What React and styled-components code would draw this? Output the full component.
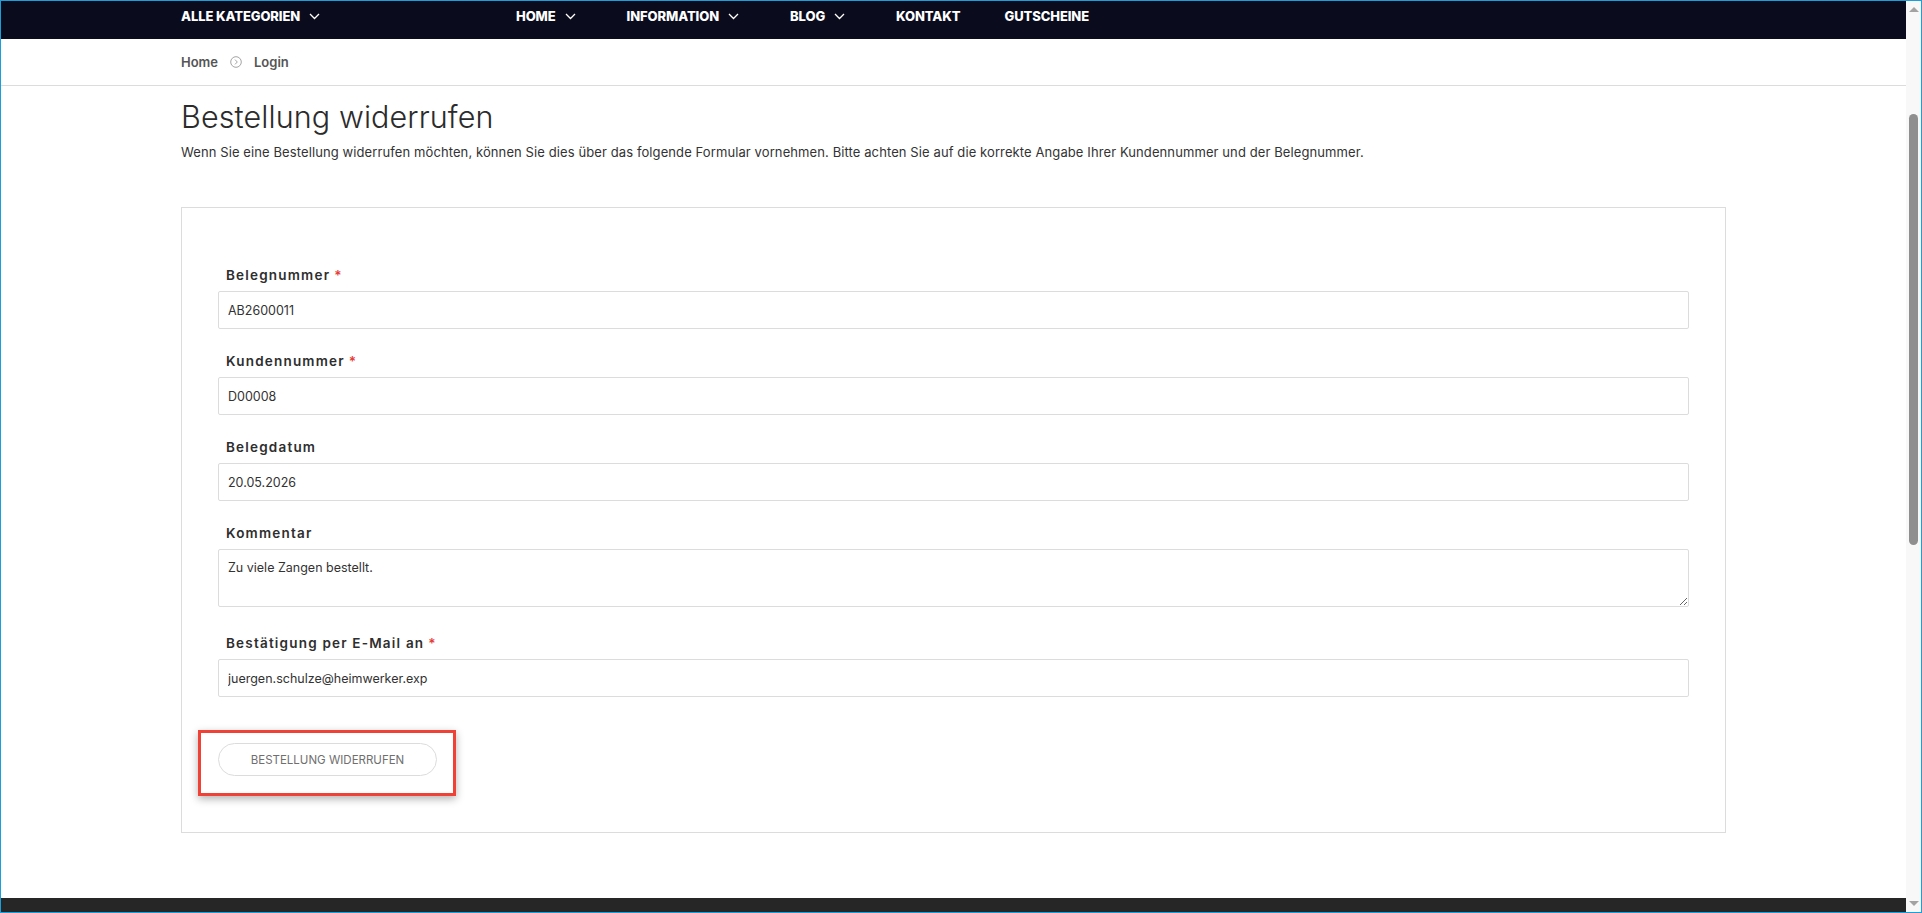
import React from 'react';
import styled, { createGlobalStyle } from 'styled-components';

const GlobalStyle = createGlobalStyle`
  html, body {
    margin: 0;
    padding: 0;
    overflow: hidden;
    background: #fff;
  }
  body {
    font-family: Inter, "Open Sans", "Liberation Sans", sans-serif;
    color: #333;
  }
  * {
    box-sizing: border-box;
  }
`;

const ChevronDown = () => (
  <svg width="11" height="7" viewBox="0 0 11 7" fill="none">
    <path d="M1 1l4.5 4.5L10 1" stroke="#fff" strokeWidth="1.3" />
  </svg>
);

const CircleChevron = () => (
  <svg width="12" height="12" viewBox="0 0 12 12" fill="none">
    <circle cx="6" cy="6" r="5.3" stroke="#9a9a9a" strokeWidth="0.9" />
    <path d="M5 3.6L7.3 6L5 8.4" stroke="#9a9a9a" strokeWidth="0.9" />
  </svg>
);

const fields = [
  { label: 'Belegnummer', value: 'AB2600011', required: true },
  { label: 'Kundennummer', value: 'D00008', required: true },
  { label: 'Belegdatum', value: '20.05.2026' },
  { label: 'Kommentar', value: 'Zu viele Zangen bestellt.', multiline: true },
  { label: 'Bestätigung per E-Mail an', value: 'juergen.schulze@heimwerker.exp', required: true },
];

const menu = [
  { name: 'Home', drop: true, space: 51 },
  { name: 'Information', drop: true, space: 51 },
  { name: 'Blog', drop: true, space: 51 },
  { name: 'Kontakt', space: 44 },
  { name: 'Gutscheine', space: 0 },
];

const App = () => {
  return (
    <>
      <GlobalStyle />
      <Frame>
        <Page>
          <TopNav>
            <Container>
              <NavRow>
                <Categories>
                  <NavLink>Alle Kategorien</NavLink>
                  <ChevronDown />
                </Categories>
                <Menu>
                  {menu.map((item) => (
                    <NavItem key={item.name} $space={item.space}>
                      <NavLink>{item.name}</NavLink>
                      {item.drop ? <ChevronDown /> : null}
                    </NavItem>
                  ))}
                </Menu>
              </NavRow>
            </Container>
          </TopNav>

          <BreadcrumbBar>
            <Container>
              <Crumbs>
                <Crumb>Home</Crumb>
                <CircleChevron />
                <Crumb>Login</Crumb>
              </Crumbs>
            </Container>
          </BreadcrumbBar>

          <Main>
            <Container>
              <Title>Bestellung widerrufen</Title>
              <Intro>
                Wenn Sie eine Bestellung widerrufen möchten, können Sie dies über das folgende Formular vornehmen. Bitte achten Sie auf die korrekte Angabe Ihrer Kundennummer und der Belegnummer.
              </Intro>

              <Card>
                {fields.map((f) => (
                  <Field key={f.label} $multiline={f.multiline}>
                    <Label>
                      {f.label}
                      {f.required ? <Required>*</Required> : null}
                    </Label>
                    {f.multiline ? (
                      <TextArea defaultValue={f.value} />
                    ) : (
                      <Input type="text" defaultValue={f.value} />
                    )}
                  </Field>
                ))}
                <Actions>
                  <Highlight>
                    <SubmitButton type="button">Bestellung widerrufen</SubmitButton>
                  </Highlight>
                </Actions>
              </Card>
            </Container>
          </Main>

          <Footer />
        </Page>

        <Scrollbar>
          <ArrowBox>
            <ArrowUp />
          </ArrowBox>
          <Track>
            <Thumb />
          </Track>
          <ArrowBox>
            <ArrowDown />
          </ArrowBox>
        </Scrollbar>
      </Frame>
    </>
  );
};

const Frame = styled.div`
  width: 1922px;
  height: 913px;
  border: 1px solid #1a9fdb;
  display: flex;
  overflow: hidden;
`;

const Page = styled.div`
  flex: 1;
  min-width: 0;
  display: flex;
  flex-direction: column;
`;

const Container = styled.div`
  width: 1545px;
  margin: 0 auto;
`;

const TopNav = styled.div`
  height: 38px;
  background: #0a0c1e;
`;

const NavRow = styled.div`
  display: flex;
  align-items: center;
  padding-top: 5px;
`;

const Categories = styled.div`
  width: 335px;
  display: flex;
  align-items: center;
  gap: 9px;
`;

const Menu = styled.div`
  display: flex;
  align-items: center;
`;

const NavItem = styled.div`
  display: flex;
  align-items: center;
  gap: 9px;
  margin-right: ${(p) => p.$space}px;
`;

const NavLink = styled.span`
  color: #fff;
  font-size: 13px;
  line-height: 20px;
  font-weight: 800;
  text-transform: uppercase;
  letter-spacing: -0.1px;
`;

const BreadcrumbBar = styled.div`
  height: 47px;
  border-bottom: 1px solid #dcdcdc;
  display: flex;
  align-items: center;
`;

const Crumbs = styled.div`
  display: flex;
  align-items: center;
  gap: 12px;
`;

const Crumb = styled.span`
  font-size: 13px;
  font-weight: 600;
  color: #555;
`;

const Main = styled.div`
  flex: 1;
  padding-top: 12px;
`;

const Title = styled.h1`
  margin: 0;
  font-size: 30.5px;
  line-height: 38px;
  font-weight: 300;
  color: #2b2b2b;
  letter-spacing: 0.1px;
`;

const Intro = styled.p`
  margin: 6px 0 45px;
  font-size: 13px;
  line-height: 20px;
  letter-spacing: 0.1px;
  color: #333;
`;

const Card = styled.div`
  border: 1px solid #dcdcdc;
  padding: 57px 36px 56px;
`;

const Field = styled.div`
  margin-bottom: ${(p) => (p.$multiline ? '26px' : '22px')};
`;

const Label = styled.label`
  display: block;
  padding-left: 8px;
  margin-bottom: 6px;
  font-size: 13.5px;
  line-height: 20px;
  font-weight: 600;
  letter-spacing: 1.2px;
  color: #2e2e2e;
`;

const Required = styled.span`
  color: #e53935;
  margin-left: 4px;
`;

const Input = styled.input`
  display: block;
  width: 100%;
  height: 38px;
  padding: 0 9px;
  border: 1px solid #dcdcdc;
  border-radius: 2px;
  font-family: inherit;
  font-size: 12.5px;
  color: #333;
  background: #fff;
  outline: none;
`;

const TextArea = styled.textarea`
  display: block;
  width: 100%;
  height: 58px;
  padding: 9px 9px;
  border: 1px solid #dcdcdc;
  border-radius: 2px;
  font-family: inherit;
  font-size: 12.5px;
  line-height: 18px;
  color: #333;
  background: #fff;
  resize: vertical;
  outline: none;
`;

/* the last field's 22px margin collapses into this one */
const Actions = styled.div`
  margin-top: 46px;
  display: flex;
`;

const Highlight = styled.div`
  position: relative;
  display: flex;

  &::after {
    content: '';
    position: absolute;
    top: -13px;
    left: -20px;
    right: -19px;
    bottom: -20px;
    border: 3px solid #ef4136;
    box-shadow: 0 3px 8px rgba(0, 0, 0, 0.3);
    pointer-events: none;
  }
`;

const SubmitButton = styled.button`
  width: 219px;
  height: 33px;
  border: 1px solid #dcdcdc;
  border-radius: 17px;
  background: #fff;
  font-family: inherit;
  font-size: 11.5px;
  font-weight: 400;
  color: #6f6f6f;
  text-transform: uppercase;
  cursor: pointer;
`;

const Footer = styled.div`
  height: 14px;
  background: #262626;
`;

const Scrollbar = styled.div`
  width: 15px;
  background: #f8f8f8;
  display: flex;
  flex-direction: column;
`;

const ArrowBox = styled.div`
  height: 17px;
  display: flex;
  align-items: center;
  justify-content: center;
`;

const ArrowUp = styled.div`
  width: 0;
  height: 0;
  border-left: 5px solid transparent;
  border-right: 5px solid transparent;
  border-bottom: 5px solid #a3a3a3;
`;

const ArrowDown = styled(ArrowUp)`
  border-bottom: none;
  border-top: 5px solid #a3a3a3;
`;

const Track = styled.div`
  flex: 1;
  padding: 96px 3px 0;
`;

const Thumb = styled.div`
  height: 431px;
  border-radius: 5px;
  background: #8f8f8f;
`;

export default App;
